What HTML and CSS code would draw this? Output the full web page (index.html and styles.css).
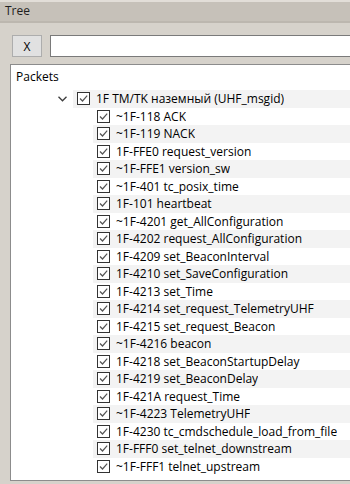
FILE: index.html
```html
<!DOCTYPE html>
<html lang="ru">
<head>
  <meta charset="UTF-8">
  <title>Tree</title>
  <link rel="stylesheet" href="styles.css">
</head>
<body>
  <div class="window">
    <div class="titlebar">Tree</div>
    <div class="panel">
      <div class="toolbar">
        <button class="clear-btn">X</button>
        <input type="text" class="filter-input">
      </div>
      <div class="tree">
        <div class="tree-header">Packets</div>
        <div class="node root">
          <span class="branch">
            <svg width="9" height="6" viewBox="0 0 9 6"><path d="M0.5 0.8 L4.5 4.8 L8.5 0.8" fill="none" stroke="#3c3c3c" stroke-width="1.3"/></svg>
          </span>
          <div class="row alt"><span class="check"></span><span class="label">1F TM/TK наземный (UHF_msgid)</span></div>
        </div>
        <div class="node"><div class="row"><span class="check"></span><span class="label">~1F-118 ACK</span></div></div>
        <div class="node"><div class="row alt"><span class="check"></span><span class="label">~1F-119 NACK</span></div></div>
        <div class="node"><div class="row"><span class="check"></span><span class="label">1F-FFE0 request_version</span></div></div>
        <div class="node"><div class="row alt"><span class="check"></span><span class="label">~1F-FFE1 version_sw</span></div></div>
        <div class="node"><div class="row"><span class="check"></span><span class="label">~1F-401 tc_posix_time</span></div></div>
        <div class="node"><div class="row alt"><span class="check"></span><span class="label">1F-101 heartbeat</span></div></div>
        <div class="node"><div class="row"><span class="check"></span><span class="label">~1F-4201 get_AllConfiguration</span></div></div>
        <div class="node"><div class="row alt"><span class="check"></span><span class="label">1F-4202 request_AllConfiguration</span></div></div>
        <div class="node"><div class="row"><span class="check"></span><span class="label">1F-4209 set_BeaconInterval</span></div></div>
        <div class="node"><div class="row alt"><span class="check"></span><span class="label">1F-4210 set_SaveConfiguration</span></div></div>
        <div class="node"><div class="row"><span class="check"></span><span class="label">1F-4213 set_Time</span></div></div>
        <div class="node"><div class="row alt"><span class="check"></span><span class="label">1F-4214 set_request_TelemetryUHF</span></div></div>
        <div class="node"><div class="row"><span class="check"></span><span class="label">1F-4215 set_request_Beacon</span></div></div>
        <div class="node"><div class="row alt"><span class="check"></span><span class="label">~1F-4216 beacon</span></div></div>
        <div class="node"><div class="row"><span class="check"></span><span class="label">1F-4218 set_BeaconStartupDelay</span></div></div>
        <div class="node"><div class="row alt"><span class="check"></span><span class="label">1F-4219 set_BeaconDelay</span></div></div>
        <div class="node"><div class="row"><span class="check"></span><span class="label">1F-421A request_Time</span></div></div>
        <div class="node"><div class="row alt"><span class="check"></span><span class="label">~1F-4223 TelemetryUHF</span></div></div>
        <div class="node"><div class="row"><span class="check"></span><span class="label">1F-4230 tc_cmdschedule_load_from_file</span></div></div>
        <div class="node"><div class="row alt"><span class="check"></span><span class="label">1F-FFF0 set_telnet_downstream</span></div></div>
        <div class="node"><div class="row"><span class="check"></span><span class="label">~1F-FFF1 telnet_upstream</span></div></div>
      </div>
    </div>
  </div>
</body>
</html>
```

FILE: styles.css
```css
body {
  margin: 0;
  padding: 0;
  width: 350px;
  height: 484px;
  overflow: hidden;
  font-family: "Open Sans", "Noto Sans", sans-serif;
  font-size: 12px;
  color: #000;
  background-color: #d6d2cb;
}

.window {
  width: 350px;
}

.titlebar {
  height: 19px;
  line-height: 18px;
  padding-left: 5px;
  border-top: 2px solid #e2ded8;
  border-bottom: 2px solid #bcb7af;
  background-color: #c6c1b9;
  color: #1e1e1e;
}

.panel {
  padding: 12px 0 0 10px;
}

.toolbar {
  display: flex;
  align-items: center;
  gap: 8px;
  padding-left: 2px;
}

.clear-btn {
  width: 30px;
  height: 22px;
  padding: 0;
  margin: 0;
  font-family: inherit;
  font-size: 12px;
  color: #000;
  background-color: #e1e1e1;
  border: 1px solid #adadad;
}

/* the input and the tree run on past the right edge of the window */
.filter-input {
  flex: 1;
  min-width: 0;
  height: 22px;
  box-sizing: border-box;
  margin: 0;
  border: 1px solid #7a7a7a;
  border-right: none;
  background-color: #fff;
}

.tree {
  margin-top: 7px;
  height: 417px;
  box-sizing: border-box;
  border: 1px solid #8c8c8c;
  border-right: none;
  background-color: #fff;
}

.tree-header {
  height: 24px;
  line-height: 22px;
  padding-left: 5px;
  padding-top: 1px;
}

.node {
  display: flex;
  height: 17.5px;
  padding-left: 82px;
}

.node.root {
  padding-left: 0;
}

.branch {
  width: 62px;
  display: flex;
  align-items: center;
  justify-content: flex-end;
  padding-right: 6px;
  box-sizing: border-box;
}

.row {
  flex: 1;
  display: flex;
  align-items: center;
  gap: 6px;
  padding-left: 4px;
  min-width: 0;
}

.row.alt {
  background-color: #f3f3f3;
}

.check {
  flex: none;
  width: 13px;
  height: 13px;
  box-sizing: border-box;
  border: 1px solid #333;
  background: #fff url("data:image/svg+xml;utf8,<svg xmlns='http://www.w3.org/2000/svg' width='11' height='11'><path d='M2 5.5 L4.5 8 L9.2 2.6' fill='none' stroke='%23555' stroke-width='1.2'/></svg>") no-repeat center;
}

.label {
  white-space: nowrap;
  overflow: hidden;
}
```
